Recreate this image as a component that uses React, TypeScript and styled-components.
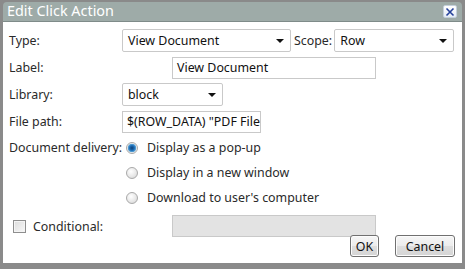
import React from 'react';
import styled, { createGlobalStyle } from 'styled-components';

const GlobalStyle = createGlobalStyle`
  html, body {
    margin: 0;
    padding: 0;
    background: #ffffff;
  }
  * {
    box-sizing: border-box;
  }
`;

const deliveryOptions = [
  { label: 'Display as a pop-up', checked: true },
  { label: 'Display in a new window', checked: false },
  { label: "Download to user's computer", checked: false },
];

export default function App() {
  return (
    <>
      <GlobalStyle />
      <Dialog>
        <TitleBar>
          <Title>Edit Click Action</Title>
          <CloseButton>
            <svg width="10" height="10" viewBox="0 0 10 10">
              <path d="M1.5 1.5 L8.5 8.5 M8.5 1.5 L1.5 8.5" stroke="#24409a" strokeWidth="1.6" />
            </svg>
          </CloseButton>
        </TitleBar>
        <Body>
          <Row>
            <Label>Type:</Label>
            <Select $width={169}>
              View Document
              <Arrow />
            </Select>
            <InlineLabel>Scope:</InlineLabel>
            <Select $width={120}>
              Row
              <Arrow />
            </Select>
          </Row>
          <Row>
            <Label>Label:</Label>
            <TextBox $width={204} $indent={50}>View Document</TextBox>
          </Row>
          <Row>
            <Label>Library:</Label>
            <Select $width={101}>
              block
              <Arrow />
            </Select>
          </Row>
          <Row>
            <Label>File path:</Label>
            <TextBox $width={139}>$(ROW_DATA) "PDF File</TextBox>
          </Row>
          {deliveryOptions.map((opt, i) => (
            <RadioRow key={opt.label}>
              <Label>{i === 0 ? 'Document delivery:' : ''}</Label>
              <Radio $checked={opt.checked} />
              <RadioText>{opt.label}</RadioText>
            </RadioRow>
          ))}
          <ConditionRow>
            <Checkbox />
            <CondLabel>Conditional:</CondLabel>
            <TextBox $width={204} $disabled>
              {''}
            </TextBox>
          </ConditionRow>
          <Footer>
            <Button $width={29}>OK</Button>
            <Button $width={60}>Cancel</Button>
          </Footer>
        </Body>
      </Dialog>
    </>
  );
}

const Dialog = styled.div`
  width: 465px;
  height: 269px;
  background: #8a8a8a;
  padding: 2px 3px 6px 3px;
  display: flex;
  flex-direction: column;
  font-family: "Noto Sans", "Open Sans", sans-serif;
  font-size: 12.4px;
  color: #2a2a2a;
`;

const TitleBar = styled.div`
  height: 20px;
  background: #9eaba8;
  border-radius: 4px 4px 0 0;
  border-bottom: 1px solid #7f8b89;
  display: flex;
  align-items: center;
  justify-content: space-between;
  padding: 0 5px 0 4px;
`;

const Title = styled.span`
  color: #ffffff;
  font-size: 14.4px;
  line-height: 1;
`;

const CloseButton = styled.div`
  width: 14px;
  height: 13px;
  border: 1px solid #c4d0dc;
  border-radius: 2px;
  background: linear-gradient(#ffffff, #e4ecf6);
  display: flex;
  align-items: center;
  justify-content: center;
`;

const Body = styled.div`
  flex: 1;
  background: #ffffff;
  padding: 5px 7px 0 6px;
  display: flex;
  flex-direction: column;
`;

const Row = styled.div`
  height: 27px;
  display: flex;
  align-items: center;
`;

const RadioRow = styled.div`
  height: 25px;
  display: flex;
  align-items: center;
`;

const Label = styled.span`
  width: 113px;
  flex: none;
  white-space: nowrap;
`;

const InlineLabel = styled.span`
  margin: 0 2px 0 3px;
`;

const Select = styled.div<{ $width: number }>`
  position: relative;
  width: ${(p) => p.$width}px;
  height: 23px;
  border: 1px solid #c9c9c9;
  border-radius: 2px;
  background: #ffffff;
  display: flex;
  align-items: center;
  padding-left: 5px;
  color: #111;
`;

const Arrow = styled.span`
  position: absolute;
  right: 6px;
  top: 9px;
  width: 0;
  height: 0;
  border-left: 4px solid transparent;
  border-right: 4px solid transparent;
  border-top: 4px solid #111;
`;

const TextBox = styled.div<{ $width: number; $indent?: number; $disabled?: boolean }>`
  width: ${(p) => p.$width}px;
  height: 22px;
  margin-left: ${(p) => p.$indent ?? 0}px;
  border: 1px solid #c9c9c9;
  background: ${(p) => (p.$disabled ? '#e3e3e3' : '#ffffff')};
  display: flex;
  align-items: center;
  padding-left: 4px;
  color: #111;
  white-space: nowrap;
  overflow: hidden;
`;

const Radio = styled.span<{ $checked: boolean }>`
  width: 12px;
  height: 12px;
  border-radius: 50%;
  margin-left: 4px;
  border: 1px solid #a9a9a9;
  background: ${(p) =>
    p.$checked
      ? 'radial-gradient(circle, #0d3f75 0, #1f6fb8 2.5px, #5fa7d8 4px, #f0f0f0 4.6px, #e2e2e2 100%)'
      : 'radial-gradient(circle at 40% 35%, #ffffff 0, #e6e6e6 60%, #cfcfcf 100%)'};
  flex: none;
`;

const RadioText = styled.span`
  margin-left: 9px;
`;

const ConditionRow = styled.div`
  height: 24px;
  margin-top: 4px;
  display: flex;
  align-items: center;
`;

const Checkbox = styled.span`
  width: 13px;
  height: 13px;
  margin-left: 4px;
  border: 1px solid #8e8e8e;
  background: linear-gradient(135deg, #dcdcdc, #f8f8f8);
  box-shadow: inset 0 0 0 1px #f4f4f4;
  flex: none;
`;

const CondLabel = styled.span`
  width: 139px;
  margin-left: 7px;
`;

const Footer = styled.div`
  display: flex;
  justify-content: flex-end;
  gap: 16px;
  margin-top: -3px;
`;

const Button = styled.div<{ $width: number }>`
  width: ${(p) => p.$width}px;
  height: 22px;
  border: 1px solid #707070;
  border-radius: 3px;
  background: linear-gradient(#f6f6f6 0%, #ececec 50%, #dedede 51%, #d4d4d4 100%);
  box-shadow: inset 0 0 0 1px #fcfcfc;
  display: flex;
  align-items: center;
  justify-content: center;
  color: #111;
`;
